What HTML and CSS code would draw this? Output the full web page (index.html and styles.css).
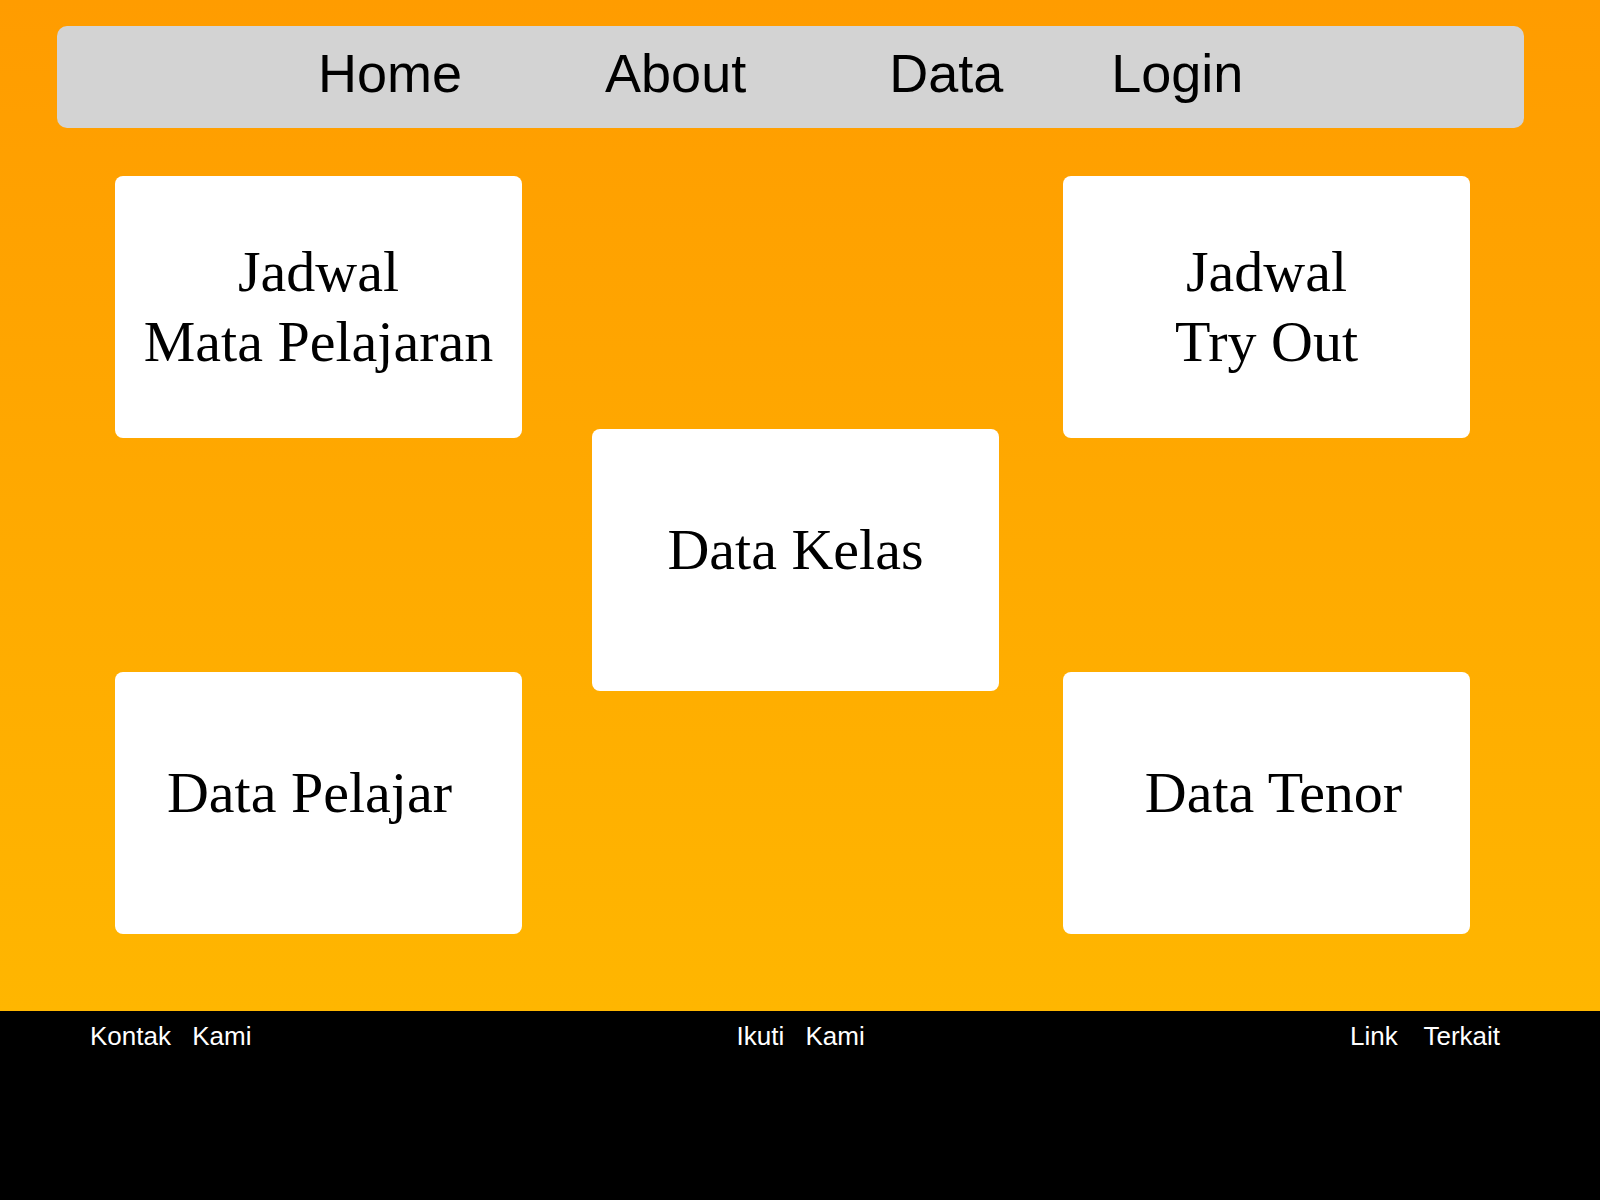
FILE: index.html
```html
<!DOCTYPE html>
<html lang="id">
<head>
<meta name="viewport" content="width=device-width, initial-scale=1">
<title>Sekolah</title>
  <link rel="stylesheet" href="styles.css">
</head>
<body>

<div class="main">
  <nav class="topnav">
    <a href="#" class="nav-link">Home</a>
    <a href="#" class="nav-link">About</a>
    <a href="#" class="nav-link">Data</a>
    <a href="#" class="nav-link last">Login</a>
  </nav>

  <div class="board">
    <div class="row">
      <div class="card">Jadwal<br>Mata Pelajaran</div>
      <div class="card">Jadwal<br>Try Out</div>
    </div>
    <div class="row middle">
      <div class="card single">Data Kelas</div>
    </div>
    <div class="row bottom">
      <div class="card single pelajar">Data Pelajar</div>
      <div class="card single tenor">Data Tenor</div>
    </div>
  </div>
</div>

<footer class="footer">
  <span>Kontak Kami</span>
  <span>Ikuti Kami</span>
  <span class="terkait">Link Terkait</span>
</footer>

</body>
</html>
```

FILE: styles.css
```css
body {
  margin: 0;
  font-family: 'Liberation Sans', Arial, sans-serif;
}
.main {
  background: linear-gradient(to bottom, #ff9c00, #ffb600);
  padding: 26px 0 77px;
}
.topnav {
  background: #d3d3d3;
  border-radius: 10px;
  margin: 0 76px 0 57px;
  padding: 16px 0 24px 261px;
  display: flex;
  gap: 143px;
}
.nav-link {
  color: #000;
  text-decoration: none;
  font-size: 54px;
}
.nav-link.last {
  margin-left: -35px;
}
.board {
  padding: 48px 130px 0 115px;
}
.row {
  display: flex;
  justify-content: space-between;
}
.row.middle {
  justify-content: center;
  margin-top: -9px;
  padding-left: 6px;
}
.row.bottom {
  margin-top: -19px;
}
.card {
  width: 407px;
  height: 262px;
  box-sizing: border-box;
  background: #fff;
  border-radius: 8px;
  display: flex;
  align-items: center;
  justify-content: center;
  text-align: center;
  font-family: 'Liberation Serif', 'Times New Roman', serif;
  font-size: 58px;
  line-height: 70px;
  color: #000;
}
.card.single {
  padding-bottom: 20px;
}
.card.pelajar {
  padding-right: 18px;
}
.card.tenor {
  padding-left: 14px;
}
.footer {
  background: #000;
  color: #fff;
  height: 189px;
  box-sizing: border-box;
  padding: 10px 100px 0 90px;
  display: flex;
  justify-content: space-between;
  align-items: flex-start;
  font-size: 26px;
  word-spacing: 14px;
}
.terkait {
  word-spacing: 19px;
}
```
